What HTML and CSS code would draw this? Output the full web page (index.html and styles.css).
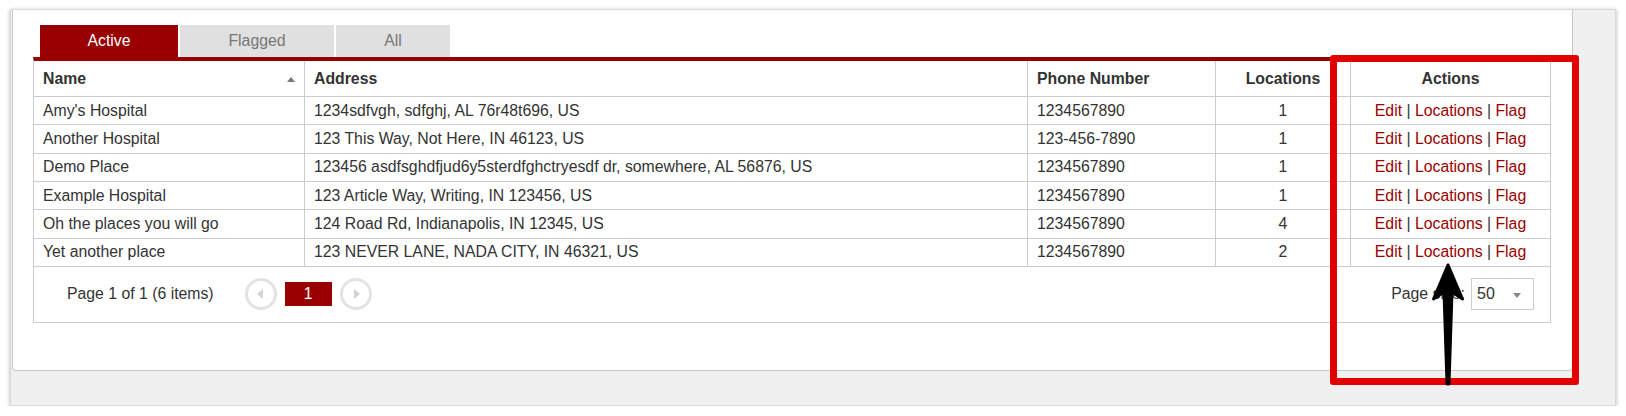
FILE: index.html
```html
<!DOCTYPE html>
<html lang="en">
<head>
    <meta charset="UTF-8">
    <meta name="viewport" content="width=device-width, initial-scale=1.0">
    <title>Hospitals</title>
    <link rel="stylesheet" href="styles.css">
</head>
<body>

    <div class="window">
        <div class="panel">
            <!-- Status tabs -->
            <ul class="tabs">
                <li class="tab tab-active">Active</li>
                <li class="tab tab-flagged">Flagged</li>
                <li class="tab tab-all">All</li>
            </ul>

            <div class="grid">
                <table>
                    <thead>
                        <tr>
                            <th class="col-name sortable">Name<span class="sort-arrow"></span></th>
                            <th class="col-address">Address</th>
                            <th class="col-phone">Phone Number</th>
                            <th class="col-locations center">Locations</th>
                            <th class="col-actions center">Actions</th>
                        </tr>
                    </thead>
                    <tbody>
                        <tr>
                            <td>Amy's Hospital</td>
                            <td>1234sdfvgh, sdfghj, AL 76r48t696, US</td>
                            <td>1234567890</td>
                            <td class="center">1</td>
                            <td class="center"><a href="#">Edit</a> | <a href="#">Locations</a> | <a href="#">Flag</a></td>
                        </tr>
                        <tr>
                            <td>Another Hospital</td>
                            <td>123 This Way, Not Here, IN 46123, US</td>
                            <td>123-456-7890</td>
                            <td class="center">1</td>
                            <td class="center"><a href="#">Edit</a> | <a href="#">Locations</a> | <a href="#">Flag</a></td>
                        </tr>
                        <tr>
                            <td>Demo Place</td>
                            <td>123456 asdfsghdfjud6y5sterdfghctryesdf dr, somewhere, AL 56876, US</td>
                            <td>1234567890</td>
                            <td class="center">1</td>
                            <td class="center"><a href="#">Edit</a> | <a href="#">Locations</a> | <a href="#">Flag</a></td>
                        </tr>
                        <tr>
                            <td>Example Hospital</td>
                            <td>123 Article Way, Writing, IN 123456, US</td>
                            <td>1234567890</td>
                            <td class="center">1</td>
                            <td class="center"><a href="#">Edit</a> | <a href="#">Locations</a> | <a href="#">Flag</a></td>
                        </tr>
                        <tr>
                            <td>Oh the places you will go</td>
                            <td>124 Road Rd, Indianapolis, IN 12345, US</td>
                            <td>1234567890</td>
                            <td class="center">4</td>
                            <td class="center"><a href="#">Edit</a> | <a href="#">Locations</a> | <a href="#">Flag</a></td>
                        </tr>
                        <tr>
                            <td>Yet another place</td>
                            <td>123 NEVER LANE, NADA CITY, IN 46321, US</td>
                            <td>1234567890</td>
                            <td class="center">2</td>
                            <td class="center"><a href="#">Edit</a> | <a href="#">Locations</a> | <a href="#">Flag</a></td>
                        </tr>
                    </tbody>
                </table>

                <!-- Pager -->
                <div class="pager">
                    <span class="pager-info">Page 1 of 1 (6 items)</span>
                    <span class="pager-nav pager-prev"></span>
                    <span class="pager-page">1</span>
                    <span class="pager-nav pager-next"></span>
                    <span class="pager-size">
                        Page size:
                        <span class="size-select">50<span class="caret"></span></span>
                    </span>
                </div>
            </div>
        </div>
    </div>

    <!-- Annotation over the Actions column -->
    <div class="callout"></div>
    <svg class="pointer" width="36" height="126" viewBox="0 0 36 126">
        <polygon points="18,3 32.5,37 22,30 19,122 17,122 14,30 3.5,37"
                 fill="#000" stroke="#000" stroke-width="3" stroke-linejoin="round"/>
    </svg>

</body>
</html>
```

FILE: styles.css
```css
html, body {
    margin: 0;
    background-color: #fff;
    font-family: "Liberation Sans", Arial, sans-serif;
    font-size: 15.8px;
    color: #333;
}

.window {
    box-sizing: border-box;
    margin: 9px 0 0 10px;
    width: 1606px;
    height: 397px;
    padding-left: 1px;
    background-color: #f0f0f0;
    border: 1px solid #d9d9d9;
    box-shadow: 0 1px 4px rgba(0, 0, 0, 0.3);
}

.panel {
    box-sizing: border-box;
    width: 1561px;
    height: 361px;
    padding: 15px 0 0 20px;
    background-color: #fff;
    border: 1px solid #c8c8c8;
    border-top: none;
    border-radius: 0 0 4px 4px;
}

/* Tabs */
.tabs {
    display: flex;
    gap: 2px;
    margin: 0 0 0 7px;
    padding: 0;
    list-style: none;
}

.tab {
    height: 32px;
    line-height: 32px;
    text-align: center;
    background-color: #e0e0e0;
    color: #777;
}

.tab-active {
    width: 138px;
    background-color: #990000;
    color: #fff;
}

.tab-flagged {
    width: 154px;
}

.tab-all {
    width: 114px;
}

/* Grid */
.grid {
    box-sizing: border-box;
    width: 1518px;
    border: 1px solid #ccc;
    border-top: 4px solid #990000;
}

.grid table {
    width: 100%;
    border-spacing: 0;
    table-layout: fixed;
}

.grid th,
.grid td {
    box-sizing: border-box;
    padding: 0 9px;
    text-align: left;
    white-space: nowrap;
    border-right: 1px solid #ccc;
    border-bottom: 1px solid #ccc;
}

.grid th:last-child,
.grid td:last-child {
    border-right: none;
}

.grid th {
    height: 36px;
    font-weight: bold;
}

.grid td {
    height: 28.33px;
}

.grid .center {
    text-align: center;
}

.col-name { width: 271px; }
.col-address { width: 723px; }
.col-phone { width: 188px; }
.col-locations { width: 135px; }
.col-actions { width: 199px; }

.sortable {
    position: relative;
}

.sort-arrow {
    position: absolute;
    right: 9px;
    top: 16px;
    border-left: 4px solid transparent;
    border-right: 4px solid transparent;
    border-bottom: 5px solid #777;
}

.grid a {
    color: #990000;
    text-decoration: none;
}

/* Pager */
.pager {
    display: flex;
    align-items: center;
    height: 55px;
    padding: 0 16px 0 33px;
}

.pager-info {
    margin-right: 31px;
}

.pager-nav {
    box-sizing: border-box;
    position: relative;
    width: 32px;
    height: 32px;
    border: 3px solid #e3e3e3;
    border-radius: 50%;
}

.pager-nav::after {
    content: "";
    position: absolute;
    top: 8px;
    border-top: 5px solid transparent;
    border-bottom: 5px solid transparent;
}

.pager-prev::after {
    left: 9px;
    border-right: 6px solid #d2d2d2;
}

.pager-next::after {
    left: 11px;
    border-left: 6px solid #d2d2d2;
}

.pager-page {
    width: 47px;
    height: 24px;
    line-height: 24px;
    margin: 0 8px;
    text-align: center;
    background-color: #990000;
    color: #fff;
}

.pager-size {
    display: flex;
    align-items: center;
    gap: 6px;
    margin-left: auto;
}

.size-select {
    box-sizing: border-box;
    position: relative;
    width: 63px;
    height: 32px;
    line-height: 30px;
    padding-left: 5px;
    border: 1px solid #ccc;
    font-size: 16px;
}

.caret {
    position: absolute;
    right: 12px;
    top: 14px;
    border-left: 4px solid transparent;
    border-right: 4px solid transparent;
    border-top: 5px solid #888;
}

/* Screenshot annotation */
.callout {
    box-sizing: border-box;
    position: absolute;
    left: 1330px;
    top: 55px;
    width: 249px;
    height: 330px;
    border: 7px solid #e30000;
    border-radius: 3px;
}

.pointer {
    position: absolute;
    left: 1430px;
    top: 262px;
}
```
